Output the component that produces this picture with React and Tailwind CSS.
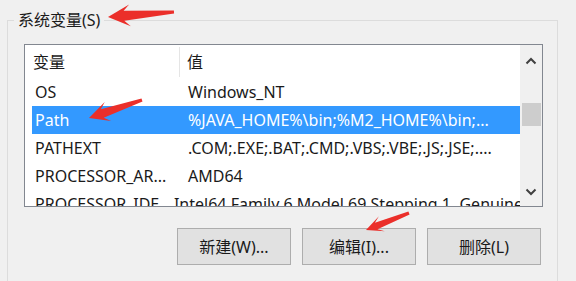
const font = { fontFamily: '"Noto Sans", "Noto Sans CJK SC", sans-serif' };

const rows = [
  { name: 'OS', value: 'Windows_NT' },
  { name: 'Path', value: '%JAVA_HOME%\\bin;%M2_HOME%\\bin;...', selected: true },
  { name: 'PATHEXT', value: '.COM;.EXE;.BAT;.CMD;.VBS;.VBE;.JS;.JSE;....' },
  { name: 'PROCESSOR_AR...', value: 'AMD64' },
  { name: 'PROCESSOR_IDE...', value: 'Intel64 Family 6 Model 69 Stepping 1, GenuineIntel' },
];

// red annotation arrow, tip -> tail
const arrowPoints = (tx, ty, sx, sy, hl = 22, hw = 11, sw = 5) => {
  const len = Math.hypot(sx - tx, sy - ty);
  const dx = (sx - tx) / len;
  const dy = (sy - ty) / len;
  const nx = -dy;
  const ny = dx;
  const bx = tx + dx * hl;
  const by = ty + dy * hl;
  const jx = tx + dx * (hl - 6);
  const jy = ty + dy * (hl - 6);
  const p = [
    [tx, ty],
    [bx + nx * hw, by + ny * hw],
    [jx + nx * sw, jy + ny * sw],
    [sx + nx * 1.5, sy + ny * 1.5],
    [sx - nx * 1.5, sy - ny * 1.5],
    [jx - nx * sw, jy - ny * sw],
    [bx - nx * hw, by - ny * hw],
  ];
  return p.map((q) => q.map((v) => v.toFixed(1)).join(',')).join(' ');
};

const Button = ({ children }) => (
  <button className="w-[114px] h-[37px] bg-[#e1e1e1] border border-[#adadad] text-[16px] text-[#1a1a1a]" style={font}>
    {children}
  </button>
);

export default function App() {
  return (
    <div className="relative w-[576px] h-[281px] bg-[#f0f0f0] overflow-hidden" style={font}>
      <fieldset className="ml-[7px] mt-[10px] w-[551px] h-[300px] border border-[#dcdcdc] pl-[16px] pt-[14px]">
        <legend className="-ml-[10px] px-[4px] text-[16px] leading-[20px] text-[#1a1a1a]">系统变量(S)</legend>

        <div className="flex w-[519px] h-[163px] border border-[#828790] bg-white">
          <div className="flex-1 overflow-hidden">
            <div className="flex h-[33px] items-center text-[16px] text-[#1a1a1a]">
              <div className="w-[155px] h-[30px] flex items-center pl-[8px] border-r border-[#e5e5e5]">变量</div>
              <div className="pl-[7px]">值</div>
            </div>
            {rows.map((r) => (
              <div
                key={r.name}
                className={`ml-[7px] flex h-[28px] items-center text-[16px] whitespace-nowrap ${
                  r.selected ? 'bg-[#3399ff] text-white' : 'text-[#1a1a1a]'
                }`}
              >
                <div className="w-[148px] pl-[3px] overflow-hidden">{r.name}</div>
                <div className="pl-[8px] overflow-hidden">{r.value}</div>
              </div>
            ))}
          </div>
          <div className="w-[22px] bg-[#f0f0f0] flex flex-col items-center">
            <svg width="12" height="8" viewBox="0 0 12 8" className="mt-[12px]">
              <path d="M1.5 6.5 L6 2 L10.5 6.5" fill="none" stroke="#404040" strokeWidth="2" />
            </svg>
            <div className="mt-[38px] w-[19px] h-[23px] bg-[#cdcdcd]" />
            <svg width="12" height="8" viewBox="0 0 12 8" className="mt-auto mb-[10px]">
              <path d="M1.5 1.5 L6 6 L10.5 1.5" fill="none" stroke="#404040" strokeWidth="2" />
            </svg>
          </div>
        </div>

        <div className="flex gap-[11px] pl-[153px] mt-[21px]">
          <Button>新建(W)...</Button>
          <Button>编辑(I)...</Button>
          <Button>删除(L)</Button>
        </div>
      </fieldset>

      <svg className="absolute left-0 top-0" width="576" height="281">
        <polygon points={arrowPoints(108, 17, 174, 12)} fill="#eb2f2a" />
        <polygon points={arrowPoints(89, 118, 142, 100, 20, 10, 4.5)} fill="#eb2f2a" />
        <polygon points={arrowPoints(366, 230, 409, 213, 17, 8, 3.5)} fill="#eb2f2a" />
      </svg>
    </div>
  );
}
